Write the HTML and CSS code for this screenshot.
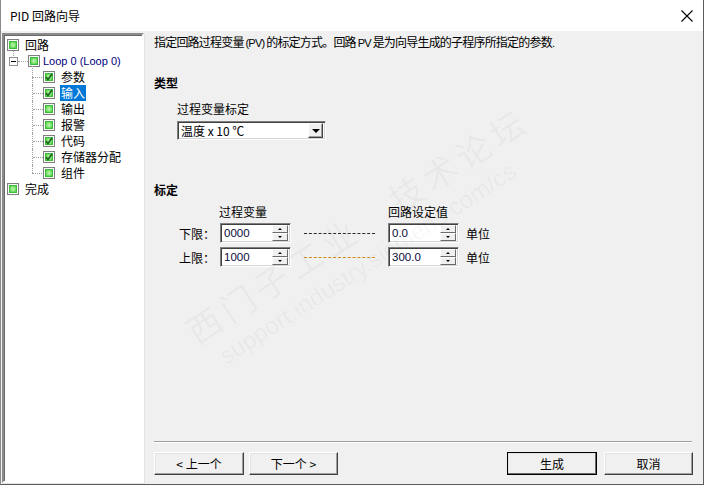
FILE: index.html
```html
<!DOCTYPE html>
<html lang="zh-CN">
<head>
    <meta charset="UTF-8">
    <title>PID 回路向导</title>
    <link rel="stylesheet" href="styles.css">
</head>
<body>
    <div class="window">
        <div class="titlebar">
            <span class="title">PID 回路向导</span>
            <svg class="close" width="12" height="12" viewBox="0 0 12 12">
                <path d="M0.5 0.5 L11.5 11.5 M11.5 0.5 L0.5 11.5" stroke="#000" stroke-width="1.1" fill="none"/>
            </svg>
        </div>
        <div class="main">
            <div class="tree">
                <div class="row root-first">
                    <span class="box"></span><span class="label">回路</span>
                </div>
                <div class="row loop">
                    <span class="expander"></span>
                    <span class="box"></span><span class="label blue">Loop 0 (Loop 0)</span>
                </div>
                <div class="row child first">
                    <span class="branch"></span>
                    <span class="box checked"><svg width="8" height="8" viewBox="0 0 8 8"><path d="M1 4 L3 6.5 L7 1" stroke="#1b5e1b" stroke-width="1.6" fill="none"/></svg></span><span class="label">参数</span>
                </div>
                <div class="row child">
                    <span class="branch"></span>
                    <span class="box checked"><svg width="8" height="8" viewBox="0 0 8 8"><path d="M1 4 L3 6.5 L7 1" stroke="#1b5e1b" stroke-width="1.6" fill="none"/></svg></span><span class="label selected">输入</span>
                </div>
                <div class="row child">
                    <span class="branch"></span>
                    <span class="box"></span><span class="label">输出</span>
                </div>
                <div class="row child">
                    <span class="branch"></span>
                    <span class="box"></span><span class="label">报警</span>
                </div>
                <div class="row child">
                    <span class="branch"></span>
                    <span class="box checked"><svg width="8" height="8" viewBox="0 0 8 8"><path d="M1 4 L3 6.5 L7 1" stroke="#1b5e1b" stroke-width="1.6" fill="none"/></svg></span><span class="label">代码</span>
                </div>
                <div class="row child">
                    <span class="branch"></span>
                    <span class="box checked"><svg width="8" height="8" viewBox="0 0 8 8"><path d="M1 4 L3 6.5 L7 1" stroke="#1b5e1b" stroke-width="1.6" fill="none"/></svg></span><span class="label">存储器分配</span>
                </div>
                <div class="row child last">
                    <span class="branch"></span>
                    <span class="box"></span><span class="label">组件</span>
                </div>
                <div class="row">
                    <span class="box"></span><span class="label">完成</span>
                </div>
            </div>

            <div class="content">
                <div class="intro">指定回路过程变量 <span class="sm">(PV)</span> 的标定方式。回路 <span class="sm">PV</span> 是为向导生成的子程序所指定的参数<span class="sm">.</span></div>

                <div class="section-title type-title">类型</div>
                <div class="field-label">过程变量标定</div>
                <div class="combo">
                    <span class="combo-text">温度 x 10 ℃</span>
                    <span class="combo-btn"><span class="arrow-down"></span></span>
                </div>

                <div class="section-title scale-title">标定</div>
                <div class="scale-head">
                    <span class="col-a">过程变量</span>
                    <span class="col-b">回路设定值</span>
                </div>
                <div class="scale-row">
                    <span class="row-label">下限：</span>
                    <div class="spin">
                        <span class="spin-text">0000</span>
                        <span class="spin-btns"><span class="sb"><i class="up"></i></span><span class="sb"><i class="down"></i></span></span>
                    </div>
                    <span class="dash"></span>
                    <div class="spin">
                        <span class="spin-text">0.0</span>
                        <span class="spin-btns"><span class="sb"><i class="up"></i></span><span class="sb"><i class="down"></i></span></span>
                    </div>
                    <span class="unit">单位</span>
                </div>
                <div class="scale-row">
                    <span class="row-label">上限：</span>
                    <div class="spin">
                        <span class="spin-text">1000</span>
                        <span class="spin-btns"><span class="sb"><i class="up"></i></span><span class="sb"><i class="down"></i></span></span>
                    </div>
                    <span class="dash orange"></span>
                    <div class="spin">
                        <span class="spin-text">300.0</span>
                        <span class="spin-btns"><span class="sb"><i class="up"></i></span><span class="sb"><i class="down"></i></span></span>
                    </div>
                    <span class="unit">单位</span>
                </div>

                <div class="spacer"></div>
                <div class="separator"></div>
                <div class="buttons">
                    <button class="btn btn-prev">&lt; 上一个</button>
                    <button class="btn btn-next">下一个 &gt;</button>
                    <span class="grow"></span>
                    <button class="btn btn-default">生成</button>
                    <button class="btn btn-cancel">取消</button>
                </div>

                <div class="watermark">
                    <div class="wm-big">西门子工业 &nbsp; 技术论坛</div>
                    <div class="wm-small">support.industry.siemens.com/cs</div>
                </div>
            </div>
        </div>
    </div>
</body>
</html>
```

FILE: styles.css
```css
* {
    box-sizing: border-box;
}
body {
    margin: 0;
    padding: 0;
    font-family: "Liberation Sans", "Noto Sans CJK SC", sans-serif;
    font-size: 12px;
    color: #000;
    background: #f0f0f0;
}
.window {
    width: 704px;
    height: 485px;
    display: flex;
    flex-direction: column;
    border-right: 1px solid #5c5c5c;
    border-bottom: 1px solid #5c5c5c;
    border-left: 1px solid #8a8a8a;
    background: #f0f0f0;
    overflow: hidden;
}
.titlebar {
    height: 31px;
    flex: none;
    background: #fff;
    display: flex;
    align-items: center;
    padding: 0 10px 0 9px;
}
.title {
    flex: 1;
    font-family: "Noto Sans CJK SC", sans-serif;
    font-size: 12px;
    line-height: 16px;
}
.main {
    flex: 1;
    display: flex;
    min-height: 0;
}

/* tree */
.tree {
    width: 142px;
    flex: none;
    margin: 2px 0 1px 1px;
    background: #fff;
    border-style: solid;
    border-width: 2px;
    border-color: #8c8c8c #ffffff #ffffff #8c8c8c;
    box-shadow: inset 1px 1px 0 #696969, 1px 1px 0 #e3e3e3;
    padding-top: 2px;
    font-family: "Noto Sans CJK SC", sans-serif;
}
.row {
    height: 16px;
    display: flex;
    align-items: center;
    padding-left: 3px;
    position: relative;
}
.box {
    width: 12px;
    height: 12px;
    flex: none;
    border: 1px solid #7e7e7e;
    padding: 1px;
    background: #fff;
    display: flex;
    align-items: center;
    justify-content: center;
    position: relative;
}
.box::before {
    content: "";
    position: absolute;
    left: 1px;
    top: 1px;
    right: 1px;
    bottom: 1px;
    border: 1px solid #3dbb3d;
    background: radial-gradient(circle at 50% 50%, #c8f7bb 0, #7fe270 55%, #45cc45 100%);
}
.box svg {
    position: relative;
}
.label {
    margin-left: 5px;
    line-height: 16px;
    padding: 0 1px;
    white-space: nowrap;
}
.blue {
    color: #000080;
    font-family: "Liberation Sans", sans-serif;
    font-size: 11px;
    margin-left: 2px;
}
.selected {
    background: #0078d7;
    color: #fff;
}
.root-first::after {
    content: "";
    position: absolute;
    left: 9px;
    top: 14px;
    height: 7px;
    border-left: 1px dotted #a0a0a0;
}
.loop {
    padding-left: 5px;
}
.expander {
    width: 9px;
    height: 9px;
    border: 1px solid #919191;
    background: #fff;
    position: relative;
    margin-right: 10px;
}
.expander::before {
    content: "";
    position: absolute;
    left: 1px;
    top: 3px;
    width: 5px;
    height: 1px;
    background: #000;
}
.expander::after {
    content: "";
    position: absolute;
    left: 8px;
    top: 3px;
    width: 10px;
    border-top: 1px dotted #a0a0a0;
}
.child {
    padding-left: 28px;
}
.branch {
    width: 11px;
    height: 16px;
    flex: none;
    border-left: 1px dotted #a0a0a0;
    position: relative;
}
.branch::after {
    content: "";
    position: absolute;
    left: 0;
    top: 8px;
    width: 10px;
    border-top: 1px dotted #a0a0a0;
}
.first .branch {
    border-left: none;
}
.first .branch::before {
    content: "";
    position: absolute;
    left: 0;
    top: -3px;
    height: 19px;
    border-left: 1px dotted #a0a0a0;
}
.last .branch {
    border-left: none;
}
.last .branch::before {
    content: "";
    position: absolute;
    left: 0;
    top: 0;
    height: 8px;
    border-left: 1px dotted #a0a0a0;
}

/* content */
.content {
    flex: 1;
    display: flex;
    flex-direction: column;
    padding: 3px 10px 9px 10px;
    position: relative;
    font-family: "Noto Sans CJK SC", sans-serif;
}
.intro {
    line-height: 16px;
    white-space: nowrap;
    letter-spacing: -0.8px;
}
.sm {
    font-family: "Liberation Sans", sans-serif;
    font-size: 11px;
}
.section-title {
    font-weight: bold;
    line-height: 16px;
}
.type-title {
    margin-top: 24px;
}
.field-label {
    margin-top: 10px;
    margin-left: 23px;
    line-height: 16px;
}
.combo {
    margin-top: 4px;
    margin-left: 23px;
    width: 149px;
    height: 19px;
    display: flex;
    align-items: center;
    background: #fff;
    border-style: solid;
    border-width: 1px;
    border-color: #808080 #ffffff #ffffff #808080;
    box-shadow: inset 1px 1px 0 #404040, inset -1px -1px 0 #d4d4d4;
    padding: 2px;
}
.combo-text {
    flex: 1;
    line-height: 15px;
    padding-left: 1px;
}
.combo-btn {
    width: 15px;
    height: 15px;
    background: #f0f0f0;
    border-style: solid;
    border-width: 1px;
    border-color: #ffffff #404040 #404040 #ffffff;
    box-shadow: inset -1px -1px 0 #a0a0a0;
    display: flex;
    align-items: center;
    justify-content: center;
}
.arrow-down {
    width: 0;
    height: 0;
    border-left: 4px solid transparent;
    border-right: 4px solid transparent;
    border-top: 4px solid #000;
}
.scale-title {
    margin-top: 42px;
}
.scale-head {
    margin-top: 6px;
    display: flex;
    line-height: 16px;
}
.col-a {
    margin-left: 65px;
}
.col-b {
    margin-left: 121px;
}
.scale-row {
    display: flex;
    align-items: center;
    height: 20px;
    margin-top: 3px;
    padding-left: 25px;
}
.scale-row + .scale-row {
    margin-top: 4px;
}
.row-label {
    width: 41px;
}
.spin {
    width: 71px;
    height: 20px;
    display: flex;
    align-items: center;
    background: #fff;
    border-style: solid;
    border-width: 1px;
    border-color: #808080 #ffffff #ffffff #808080;
    box-shadow: inset 1px 1px 0 #404040, inset -1px -1px 0 #d4d4d4;
    padding: 2px;
}
.spin-text {
    flex: 1;
    font-family: "Liberation Sans", sans-serif;
    font-size: 11.5px;
    padding-left: 1px;
    color: #0a0a3a;
}
.spin-btns {
    width: 16px;
    height: 16px;
    display: flex;
    flex-direction: column;
}
.sb {
    flex: 1;
    background: #f0f0f0;
    border-style: solid;
    border-width: 1px;
    border-color: #ffffff #6a6a6a #6a6a6a #ffffff;
    display: flex;
    align-items: center;
    justify-content: center;
}
.sb i {
    width: 0;
    height: 0;
    border-left: 2px solid transparent;
    border-right: 2px solid transparent;
}
.sb .up {
    border-bottom: 2px solid #000;
}
.sb .down {
    border-top: 2px solid #000;
}
.dash {
    width: 71px;
    height: 1px;
    margin: 0 13px;
    border-top: 1px dashed #2a2a2a;
}
.dash.orange {
    border-top-color: #d08a1a;
}
.unit {
    margin-left: 7px;
}
.spacer {
    flex: 1;
}
.separator {
    height: 2px;
    border-top: 1px solid #a0a0a0;
    border-bottom: 1px solid #ffffff;
    margin-right: 1px;
}
.buttons {
    margin-top: 9px;
    display: flex;
    gap: 5px;
}
.grow {
    flex: 1;
}
.btn {
    height: 23px;
    font-family: "Noto Sans CJK SC", sans-serif;
    font-size: 12px;
    background: #f0f0f0;
    border-style: solid;
    border-width: 1px;
    border-color: #ffffff #404040 #404040 #ffffff;
    box-shadow: inset -1px -1px 0 #a0a0a0, inset 1px 1px 0 #e3e3e3;
    padding: 0;
    color: #000;
}
.btn-prev {
    width: 90px;
}
.btn-next {
    width: 89px;
}
.btn-default {
    width: 90px;
    outline: 1px solid #000;
    outline-offset: -1px;
    border-color: #ffffff #000 #000 #ffffff;
    box-shadow: inset -1px -1px 0 #6a6a6a, inset 1px 1px 0 #e3e3e3;
}
.btn-cancel {
    width: 89px;
    margin-left: 2px;
}

/* faint forum watermark over the page */
.watermark {
    position: absolute;
    left: 32px;
    top: 282px;
    transform: rotate(-33deg);
    transform-origin: left top;
    color: rgba(0, 0, 0, 0.045);
    pointer-events: none;
    white-space: nowrap;
}
.wm-big {
    font-size: 34px;
    letter-spacing: 6px;
}
.wm-small {
    font-family: "Liberation Sans", sans-serif;
    font-size: 24px;
    margin-left: 14px;
}
```
